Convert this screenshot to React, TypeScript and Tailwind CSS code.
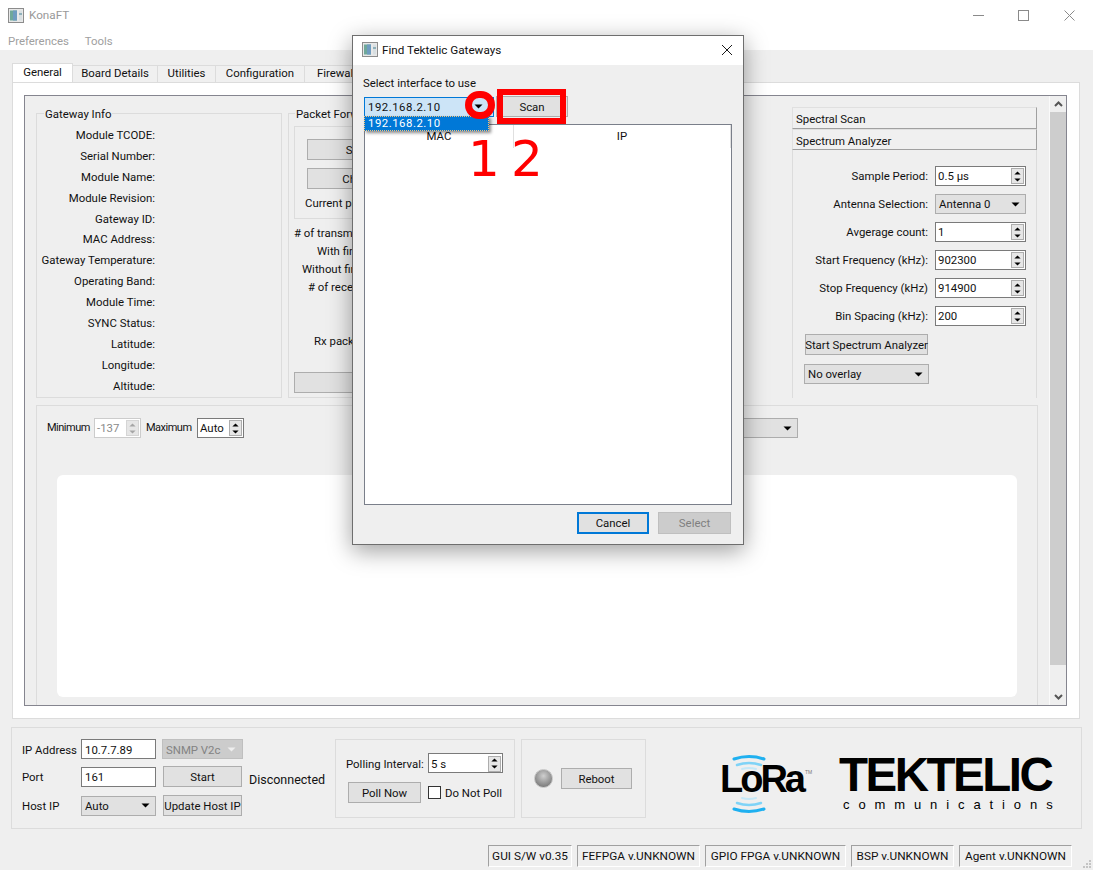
const infoLabels = [
  "Module TCODE:",
  "Serial Number:",
  "Module Name:",
  "Module Revision:",
  "Gateway ID:",
  "MAC Address:",
  "Gateway Temperature:",
  "Operating Band:",
  "Module Time:",
  "SYNC Status:",
  "Latitude:",
  "Longitude:",
  "Altitude:",
];

const tabs = [
  { label: "Board Details", w: "w-[85px]" },
  { label: "Utilities", w: "w-[58px]" },
  { label: "Configuration", w: "w-[89px]" },
  { label: "Firewall", w: "w-[64px]" },
];

const versions = [
  { label: "GUI S/W v0.35", w: "w-[84px]" },
  { label: "FEFPGA v.UNKNOWN", w: "w-[123px]" },
  { label: "GPIO FPGA v.UNKNOWN", w: "w-[141px]" },
  { label: "BSP v.UNKNOWN", w: "w-[103px]" },
  { label: "Agent v.UNKNOWN", w: "w-[113px]" },
];

const Caret = ({ up = false, color = "#000", small = false }: { up?: boolean; color?: string; small?: boolean }) => (
  <svg width={small ? 7 : 9} height={small ? 4 : 5} viewBox="0 0 9 5" className="shrink-0">
    <path d={up ? "M4.5 0.5L8.5 4.5H0.5Z" : "M0.5 0.5H8.5L4.5 4.5Z"} fill={color} />
  </svg>
);

const Btn = ({ label, className = "" }: { label?: string; className?: string }) => (
  <div className={`flex items-center justify-center border border-[#adadad] bg-[#e1e1e1] whitespace-nowrap ${className}`}>
    {label}
  </div>
);

const Field = ({ value, className = "" }: { value: string; className?: string }) => (
  <div className={`h-[20px] flex items-center border border-[#7a7a7a] bg-white pl-[3px] ${className}`}>{value}</div>
);

const Combo = ({ value, className = "" }: { value: string; className?: string }) => (
  <div className={`h-[20px] flex items-center justify-between border border-[#adadad] bg-[#e1e1e1] pl-[3px] pr-[5px] ${className}`}>
    <span>{value}</span>
    <Caret />
  </div>
);

const Spin = ({ value, className = "", disabled = false }: { value: string; className?: string; disabled?: boolean }) => (
  <div
    className={`h-[20px] flex items-center justify-between border bg-white pl-[2px] pr-[1px] ${
      disabled ? "border-[#cccccc] bg-[#efefef] text-[#8a8a8a]" : "border-[#7a7a7a]"
    } ${className}`}
  >
    <span>{value}</span>
    <div className={`flex flex-col w-[13px] h-[16px] border ${disabled ? "border-[#d5d5d5]" : "border-[#adadad]"} bg-[#e6e6e6]`}>
      <div className="flex-1 flex items-center justify-center">
        <Caret up small color={disabled ? "#a5a5a5" : "#000"} />
      </div>
      <div className="flex-1 flex items-center justify-center">
        <Caret small color={disabled ? "#a5a5a5" : "#000"} />
      </div>
    </div>
  </div>
);

const AppIcon = ({ className = "" }: { className?: string }) => (
  <svg width="16" height="15" viewBox="0 0 16 15" className={className}>
    <rect x="0.5" y="0.5" width="15" height="14" fill="#e8e8e8" stroke="#8c8c8c" />
    <rect x="2" y="2.5" width="7" height="10" fill="#6fa89a" />
    <rect x="5" y="2.5" width="4" height="10" fill="#6f9cc0" />
    <rect x="11" y="2.5" width="3" height="10" fill="#d8dfe2" />
    <rect x="11" y="5" width="3" height="2" fill="#8fb0ba" />
  </svg>
);

const SpectrumPanel = () => (
  <div className="w-[245px] flex flex-col">
    <div className="h-[22px] flex items-center pl-[3px] pt-[2px] bg-[#f0f0f0] border border-[#e0e0e0] border-r-[#a0a0a0] border-b-[#a0a0a0]">Spectral Scan</div>
    <div className="h-[21px] flex items-center pl-[3px] pt-[2px] bg-[#f0f0f0] border border-[#e0e0e0] border-r-[#a0a0a0] border-b-[#a0a0a0]">Spectrum Analyzer</div>
    <div className="flex-1 border-x border-[#dcdcdc] pt-[16px] flex flex-col">
      <div className="flex flex-col gap-[8px]">
        {[
          ["Sample Period:", "0.5 µs"],
          ["Antenna Selection:", "Antenna 0"],
          ["Avgerage count:", "1"],
          ["Start Frequency (kHz):", "902300"],
          ["Stop Frequency (kHz)", "914900"],
          ["Bin Spacing (kHz):", "200"],
        ].map(([label, value]) => (
          <div key={label} className="flex items-center">
            <div className="w-[135px] text-right">{label}</div>
            {label === "Antenna Selection:" ? (
              <Combo value={value} className="ml-[7px] w-[91px]" />
            ) : (
              <Spin value={value} className="ml-[7px] w-[91px]" />
            )}
          </div>
        ))}
      </div>
      <Btn label="Start Spectrum Analyzer" className="mt-[8px] ml-[12px] w-[123px] h-[21px]" />
      <Combo value="No overlay" className="mt-[9px] ml-[11px] w-[125px]" />
    </div>
  </div>
);

const PacketForwarder = () => (
  <div className="relative w-[440px] mt-[6px] mr-[58px] border border-[#dcdcdc] pl-[5px] pt-[12px]">
    <div className="absolute left-[6px] -top-[8px] bg-[#efefef] px-[1px]">Packet Forwarder</div>
    <div className="h-[93px] w-[425px] border border-[#dcdcdc] pl-[12px] pt-[12px]">
      <Btn label="Start" className="w-[102px] h-[21px]" />
      <Btn label="Check" className="w-[102px] h-[21px] mt-[8px]" />
      <div className="mt-[6px] -ml-[2px]">Current platform:</div>
    </div>
    <div className="mt-[5px] leading-[18px]">
      <div># of transmitted packets:</div>
      <div className="ml-[23px]">With firmware:</div>
      <div className="ml-[8px]">Without firmware:</div>
      <div className="ml-[14px]"># of received packets:</div>
      <div className="ml-[20px] mt-[36px]">Rx packets:</div>
    </div>
    <Btn label="Clear" className="w-[150px] h-[21px] mt-[22px]" />
  </div>
);

const LoraLogo = () => (
  <div className="relative w-[100px] h-[60px] text-black">
    <svg width="34" height="60" viewBox="0 0 34 60" className="absolute left-[12px] top-0" fill="none" strokeLinecap="round">
      <path d="M2 5Q17 0 32 5" stroke="#1fb0f0" strokeWidth="3" />
      <path d="M5 11Q17 7 29 11" stroke="#7fd3f7" strokeWidth="2.5" />
      <path d="M10 15Q17 13 24 15" stroke="#c4e8f8" strokeWidth="2" />
      <path d="M10 44Q17 46 24 44" stroke="#c4e8f8" strokeWidth="2" />
      <path d="M5 49Q17 53 29 49" stroke="#7fd3f7" strokeWidth="2.5" />
      <path d="M2 55Q17 60 32 55" stroke="#1fb0f0" strokeWidth="3" />
    </svg>
    <div className="absolute left-0 top-[3px] font-['Liberation_Sans',sans-serif] font-bold text-[38px] leading-[44px] tracking-[-3px]">LoRa</div>
    <div className="absolute left-[85px] top-[10px] font-['Liberation_Sans',sans-serif] text-[5px] text-[#777777]">TM</div>
  </div>
);

const TektelicLogo = () => (
  <div className="flex flex-col text-black font-['Liberation_Sans',sans-serif]">
    <div className="font-bold text-[47.5px] leading-[36px] tracking-[-2.5px]">TEKTELIC</div>
    <div className="text-[13px] leading-[14px] tracking-[8.9px] ml-[4px] mt-[5px]">communications</div>
  </div>
);

const BottomPanel = () => (
  <div className="mx-[11px] h-[102px] border border-[#dcdcdc] flex pl-[10px] pt-[11px]">
    <div className="flex w-[313px] shrink-0">
      <div className="w-[221px] flex flex-col">
        <div className="flex items-center h-[20px]">
          <div className="w-[59px] pt-[2px]">IP Address</div>
          <Field value="10.7.7.89" className="w-[75px] pt-[2px]" />
          <div className="ml-[6px] w-[81px] h-[20px] flex items-center justify-between pl-[3px] pr-[6px] pt-[1px] bg-[#cccccc] border border-[#bfbfbf] text-[#838383]">
            <span>SNMP V2c</span>
            <Caret color="#eeeeee" />
          </div>
        </div>
        <div className="flex items-center h-[21px] mt-[7px]">
          <div className="w-[59px]">Port</div>
          <Field value="161" className="w-[75px]" />
          <Btn label="Start" className="ml-[7px] w-[79px] h-[21px]" />
        </div>
        <div className="flex items-center h-[21px] mt-[8px]">
          <div className="w-[59px]">Host IP</div>
          <Combo value="Auto" className="w-[75px]" />
          <Btn label="Update Host IP" className="ml-[7px] w-[79px] h-[21px]" />
        </div>
      </div>
      <div className="ml-[6px] mt-[32px] text-[12.5px] leading-[18px]">Disconnected</div>
    </div>
    <div className="w-[180px] h-[79px] border border-[#dcdcdc] pl-[10px] pt-[13px]">
      <div className="flex items-center">
        <div className="w-[82px] pt-[2px]">Polling Interval:</div>
        <Spin value="5 s" className="w-[75px] pt-[1px]" />
      </div>
      <div className="flex items-center mt-[9px]">
        <Btn label="Poll Now" className="ml-[2px] w-[73px] h-[21px]" />
        <div className="ml-[7px] w-[13px] h-[13px] border border-[#333333] bg-white" />
        <div className="ml-[4px]">Do Not Poll</div>
      </div>
    </div>
    <div className="ml-[6px] w-[125px] h-[79px] border border-[#dcdcdc] flex items-center pl-[12px]">
      <div className="w-[19px] h-[19px] rounded-full bg-[radial-gradient(circle_at_50%_35%,#cfcfcf_0%,#9a9a9a_50%,#666666_100%)] border border-[#c4c4c4]" />
      <Btn label="Reboot" className="ml-[8px] w-[71px] h-[21px]" />
    </div>
    <div className="ml-[74px] mt-[15px]">
      <LoraLogo />
    </div>
    <div className="ml-[19px] mt-[18px]">
      <TektelicLogo />
    </div>
  </div>
);

const FindDialog = () => (
  <div className="absolute left-[352px] top-[35px] w-[392px] h-[510px] border border-[#6e6e6e] bg-[#efefef] shadow-[0_6px_22px_rgba(0,0,0,0.38)] flex flex-col">
    <div className="h-[29px] bg-white flex items-center pl-[9px] pr-[10px] pb-[2px] text-[11.7px] shrink-0">
      <AppIcon />
      <span className="ml-[4px]">Find Tektelic Gateways</span>
      <svg width="12" height="12" viewBox="0 0 12 12" className="ml-auto" stroke="#1a1a1a" fill="none">
        <path d="M1 1L11 11M11 1L1 11" />
      </svg>
    </div>
    <div className="flex-1 pl-[10px] pr-[11px] flex flex-col">
      <div className="mt-[10px] h-[16px] leading-[16px]">Select interface to use</div>
      <div className="mt-[5px] ml-[1px] flex items-center">
        <div className="w-[130px] h-[20px] flex items-center justify-between pl-[3px] pr-[10px] bg-[#cce4f7] border border-[#0078d7]">
          <span className="tracking-[0.5px]">192.168.2.10</span>
          <Caret />
        </div>
        <Btn label="Scan" className="ml-[2px] w-[72px] h-[21px]" />
      </div>
      <div className="mt-[7px] ml-[1px] h-[381px] w-[368px] border border-[#7a7f8a] bg-white">
        <div className="flex h-[23px]">
          <div className="w-[149px] text-center border-r border-[#e0e0e0] leading-[22px]">MAC</div>
          <div className="flex-1 text-center border-r border-[#e0e0e0] leading-[22px]">IP</div>
        </div>
      </div>
      <div className="mt-[7px] flex justify-end pr-[1px]">
        <div className="w-[72px] h-[22px] flex items-center justify-center border-2 border-[#0078d7] bg-[#e1e1e1]">Cancel</div>
        <div className="ml-[9px] w-[73px] h-[22px] flex items-center justify-center border border-[#bfbfbf] bg-[#cccccc] text-[#7f7f7f]">Select</div>
      </div>
    </div>
  </div>
);

export default function App() {
  return (
    <div className="relative w-[1093px] h-[870px] overflow-hidden bg-[#efefef] text-[#111111] text-[11.4px] leading-[16px] font-['Roboto',sans-serif] flex flex-col">
      {/* title + menu */}
      <div className="h-[30px] bg-white flex items-center pl-[8px] text-[#999999] text-[11.7px] shrink-0">
        <AppIcon />
        <span className="ml-[5px]">KonaFT</span>
        <div className="ml-auto flex items-center">
          <svg width="11" height="11" viewBox="0 0 11 11" stroke="#8a8a8a" fill="none" className="mr-[34px]">
            <path d="M0 5.5H11" />
          </svg>
          <svg width="11" height="11" viewBox="0 0 11 11" stroke="#8a8a8a" fill="none" className="mr-[35px]">
            <rect x="0.5" y="0.5" width="10" height="10" />
          </svg>
          <svg width="11" height="11" viewBox="0 0 11 11" stroke="#8a8a8a" fill="none" className="mr-[18px]">
            <path d="M0.5 0.5L10.5 10.5M10.5 0.5L0.5 10.5" />
          </svg>
        </div>
      </div>
      <div className="h-[20px] bg-white flex items-center pl-[8px] pt-[2px] gap-[16px] text-[#a0a0a0] shrink-0">
        <span>Preferences</span>
        <span>Tools</span>
      </div>

      {/* tabs */}
      <div className="ml-[12px] mt-[13px] flex items-end h-[20px] shrink-0">
        <div className="w-[61px] h-[20px] flex items-center justify-center pb-[3px] bg-white border border-b-0 border-[#dcdcdc]">General</div>
        {tabs.map(t => (
          <div key={t.label} className={`${t.w} h-[18px] flex items-center justify-center pb-[3px] bg-[#f0f0f0] border-t border-r border-[#dcdcdc]`}>
            {t.label}
          </div>
        ))}
      </div>
      <div className="ml-[12px] -mt-px w-[1068px] h-[637px] border border-[#dcdcdc] bg-white pl-[11px] pt-[12px] shrink-0">
        <div className="w-[1043px] h-[611px] border border-[#85858f] bg-[#efefef] flex overflow-hidden">
          <div className="w-[1024px] shrink-0 pl-[11px] pt-[11px] overflow-hidden">
            <div className="flex h-[291px]">
              <div className="relative w-[246px] mt-[6px] border border-[#dcdcdc] pt-[11px]">
                <div className="absolute left-[7px] -top-[8px] bg-[#efefef] px-[1px]">Gateway Info</div>
                {infoLabels.map(l => (
                  <div key={l} className="w-[118px] text-right h-[20.9px] leading-[20.9px] whitespace-nowrap">{l}</div>
                ))}
              </div>
              <div className="ml-[6px] flex">
                <PacketForwarder />
              </div>
              <div className="ml-[6px] flex">
                <SpectrumPanel />
              </div>
            </div>
            <div className="mt-[7px] w-[1002px] h-[320px] border border-[#dcdcdc] pl-[10px] pt-[12px]">
              <div className="flex items-center">
                <span className="w-[47px] text-[11px] tracking-[-0.5px]">Minimum</span>
                <Spin value="-137" disabled className="w-[47px]" />
                <span className="ml-[5px] w-[51px] text-[11px] tracking-[-0.5px]">Maximum</span>
                <Spin value="Auto" className="w-[47px]" />
                <Combo value="" className="ml-auto mr-[239px] w-[198px]" />
              </div>
              <div className="ml-[10px] mt-[37px] w-[960px] h-[222px] rounded-md bg-white" />
            </div>
          </div>
          <div className="w-[17px] shrink-0 border-l border-[#fafafa] flex flex-col">
            <div className="h-[16px] flex items-center justify-center">
              <svg width="9" height="6" viewBox="0 0 9 6" fill="none" stroke="#555555" strokeWidth="2">
                <path d="M1 5L4.5 1.5L8 5" />
              </svg>
            </div>
            <div className="h-[553px] bg-[#cdcdcd]" />
            <div className="flex-1 flex items-end justify-center pb-[5px]">
              <svg width="9" height="6" viewBox="0 0 9 6" fill="none" stroke="#555555" strokeWidth="2">
                <path d="M1 1L4.5 4.5L8 1" />
              </svg>
            </div>
          </div>
        </div>
      </div>

      <div className="mt-[8px] shrink-0">
        <BottomPanel />
      </div>

      {/* status bar */}
      <div className="mt-[16px] h-[22px] flex justify-end gap-[5px] pr-[21px] text-[11.8px] shrink-0">
        {versions.map(v => (
          <div key={v.label} className={`${v.w} h-[22px] flex items-center justify-center whitespace-nowrap border-l border-t border-l-[#a0a0a0] border-t-[#a0a0a0] border-r border-b border-r-white border-b-white`}>
            {v.label}
          </div>
        ))}
      </div>
      <svg width="10" height="10" viewBox="0 0 10 10" className="absolute right-[1px] bottom-[1px]" fill="#c4c4c4">
        <rect x="7" y="1" width="2" height="2" />
        <rect x="4" y="4" width="2" height="2" />
        <rect x="7" y="4" width="2" height="2" />
        <rect x="1" y="7" width="2" height="2" />
        <rect x="4" y="7" width="2" height="2" />
        <rect x="7" y="7" width="2" height="2" />
      </svg>

      <FindDialog />

      {/* open drop-down list */}
      <div className="absolute left-[364px] top-[116px] w-[125px] h-[15px] bg-[#0078d7] text-white pl-[3px] leading-[13px] tracking-[0.5px] border border-dotted border-[#f3c27a] shadow-[2px_2px_3px_rgba(0,0,0,0.45)]">
        192.168.2.10
      </div>

      {/* red annotations */}
      <div className="absolute left-[465px] top-[91px] w-[30px] h-[28px] rounded-full border-[7px] border-[#ff0000]" />
      <div className="absolute left-[497px] top-[89px] w-[69px] h-[35px] border-[6px] border-[#ff0000]" />
      <div className="absolute left-[468px] top-[130px] text-[50px] leading-[58px] text-[#ff0000] font-['DejaVu_Sans',sans-serif]">1</div>
      <div className="absolute left-[511px] top-[130px] text-[50px] leading-[58px] text-[#ff0000] font-['DejaVu_Sans',sans-serif]">2</div>
    </div>
  );
}
